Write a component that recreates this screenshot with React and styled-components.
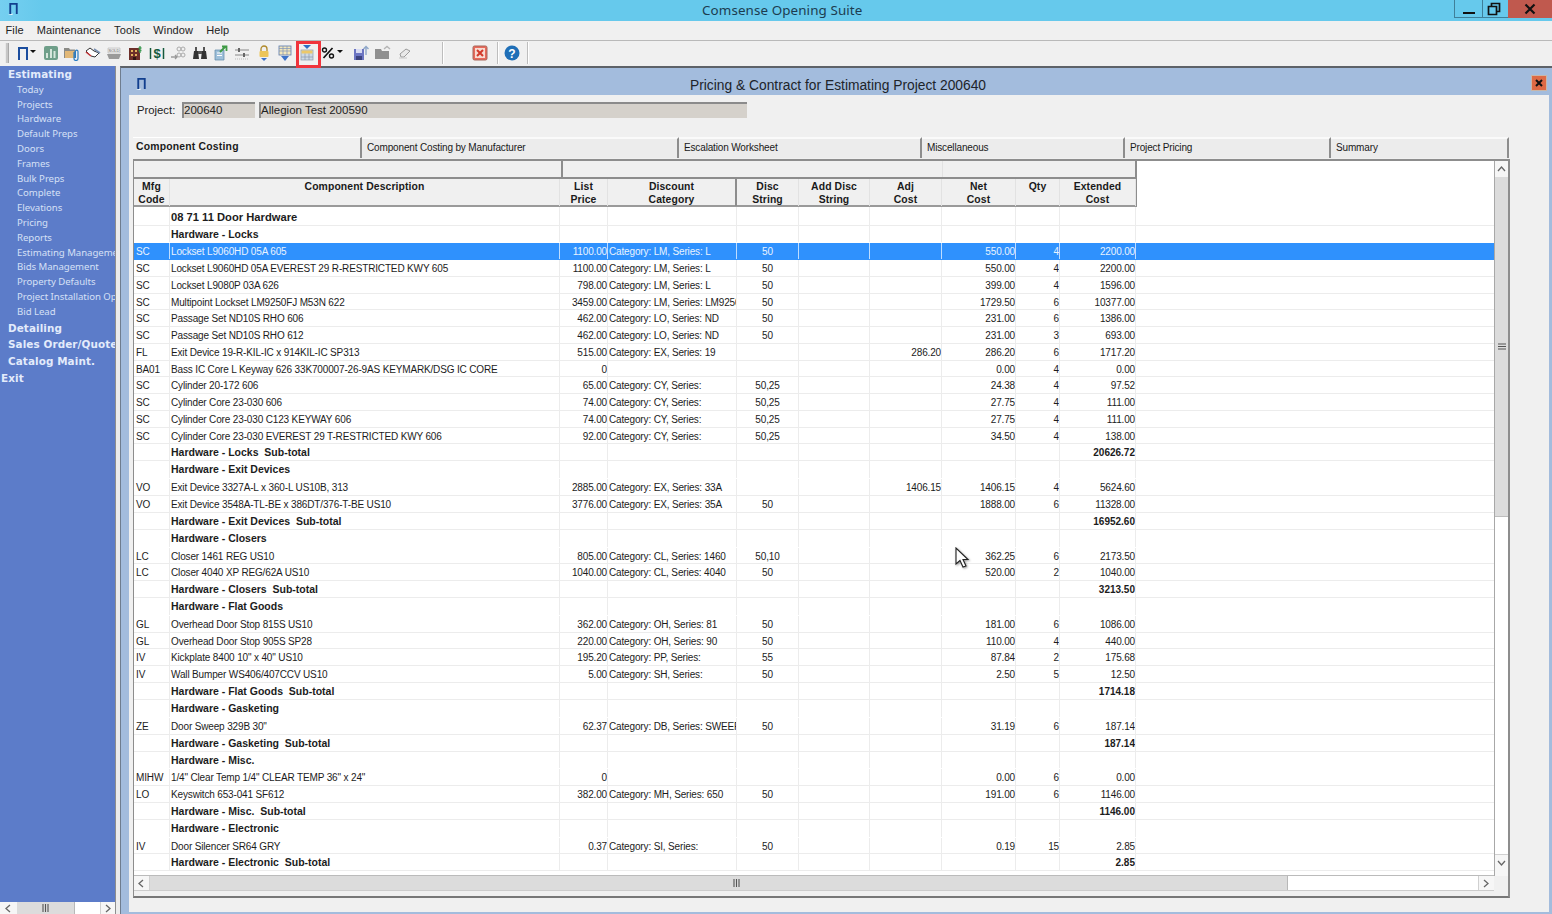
import React from "react";
import styled, { createGlobalStyle } from "styled-components";

const Global = createGlobalStyle`
  html, body { margin: 0; padding: 0; width: 1552px; height: 914px; overflow: hidden; background: #f0f0f0; }
  *, *::after { box-sizing: border-box; }
`;

const Screen = styled.div`
  position: relative;
  width: 1552px; height: 914px; overflow: hidden;
  display: flex; flex-direction: column;
  font-family: "Liberation Sans", Arial, sans-serif; color: #111; background: #f0f0f0;
`;
const TitleBar = styled.div`
  position: relative;
  height: 21px; flex: none; background: #66c9ec;
  display: flex; align-items: flex-start;
`;
const LogoCell = styled.div`
  width: 42px; height: 21px; padding: 2px 0 0 7px; background: linear-gradient(90deg,#75cff0,#66c9ec);
`;
const TitleText = styled.div`
  position: absolute; left: 702px; top: 2px;
  font: 13.4px/17px "Noto Sans", sans-serif; color: #1c3c50; white-space: nowrap; letter-spacing: .1px;
`;
const WindowButtons = styled.div`
  margin-left: auto; display: flex; height: 18px;
`;
const WinButton = styled.div`
  width: ${p => p.$w}px; height: 18px; display: flex; align-items: center; justify-content: center;
  padding-right: ${p => p.$pr || 0}px;
  background: ${p => p.$bg || "transparent"};
  border-left: ${p => p.$edge ? "1px solid #3f7f99" : "none"};
  border-bottom: ${p => p.$edge ? "1px solid #3f7f99" : "none"};
`;
const MenuBar = styled.div`
  height: 20px; flex: none; background: #f0f0f0; border-bottom: 1px solid #b9b9b9;
  display: flex; align-items: center; padding: 0 0 2px 5.500px; gap: 13px;
  font-size: 11px; color: #222;
`;
const MenuItem = styled.span` letter-spacing: .12px; `;
const Toolbar = styled.div`
  height: 25px; flex: none; background: #f0f0f0; display: flex; align-items: center; padding: 0 0 1px 5px;
`;
const Grip = styled.div`
  width: 4px; height: 20px; margin-right: 3px; background: #c6c6c6; border-left: 1px solid #e8e8e8; border-right: 1px solid #a8a8a8;
`;
const ToolButton = styled.div`
  position: relative; flex: none; width: ${p => p.$w || 21.3}px; height: 24px;
  display: flex; align-items: center; padding-left: ${p => p.$pad ?? 2.6}px;
`;
const Marked = styled(ToolButton)`
  &::after { content: ""; position: absolute; left: 0; top: 0; width: 25px; height: 27px; border: 3px solid #f0343c; }
`;
const Caret = styled.span`
  position: absolute; right: ${p => p.$r}px; top: 9px; width: 0; height: 0;
  border-left: 3px solid transparent; border-right: 3px solid transparent; border-top: 3px solid #111;
`;
const ToolSep = styled.div`
  flex: none; width: 1px; height: 22px; background: #bdbdbd; box-shadow: 1px 0 0 #fff; margin-left: ${p => p.$l}px;
`;
const Workspace = styled.div`
  flex: 1; min-height: 0; display: flex; background: #ececec;
`;
const Sidebar = styled.div`
  width: 116px; flex: none; display: flex; flex-direction: column; border-right: 1.500px solid #8e8e8e;
`;
const NavList = styled.div`
  flex: 1; min-height: 0; background: #5c7cc9; overflow: hidden;
`;
const NavHead = styled.div`
  height: 16.8px; padding-left: ${p => p.$flush ? 1 : 8}px; letter-spacing: .1px;
  font: bold 10.4px/16.8px "DejaVu Sans", sans-serif; color: #e3ebfb; white-space: nowrap; overflow: hidden;
`;
const NavItem = styled.div`
  height: 14.8px; line-height: 14.8px; padding-left: 17px; letter-spacing: -.03px;
  font-family: "Noto Sans", sans-serif; font-size: 9.6px; color: #d6e0f6; white-space: nowrap; overflow: hidden;
`;
const SideScroll = styled.div`
  height: 12px; flex: none; display: flex; background: #f4f4f4; align-items: stretch;
`;
const ScrollEnd = styled.div`
  flex: none; width: ${p => p.$w}px; height: ${p => p.$h ? p.$h + "px" : "auto"}; background: #f6f6f6;
  display: flex; align-items: center; justify-content: center;
  border-right: ${p => p.$lr ? "1px solid #d0d0d0" : "none"};
  border-left: ${p => p.$ll ? "1px solid #d0d0d0" : "none"};
  border-top: ${p => p.$lt ? "1px solid #d0d0d0" : "none"};
`;
const HThumb = styled.div`
  flex: none; width: ${p => p.$w}px; background: #dcdcdc; display: flex; align-items: center; justify-content: center;
  border-right: 1px solid #b8b8b8; padding-left: ${p => p.$shift || 0}px;
`;
const ScrollSpace = styled.div` flex: 1; background: #fff; `;
const ChildWindow = styled.div`
  flex: 1; min-width: 0; margin-left: 4px; display: flex; flex-direction: column; background: #a3bcdd;
  border-top: 2px solid #5d6268; border-left: 1px solid #6f7d8f; padding: 0 3px 2px 8px;
`;
const ChildTitle = styled.div`
  position: relative; height: 27px; flex: none; margin-left: -8px; margin-right: -3px; padding: 9px 0 0 14px;
  display: flex; align-items: flex-start;
`;
const ChildTitleText = styled.div`
  position: absolute; left: 569px; top: 9px; font-size: 13.8px; line-height: 17px; color: #20242a; white-space: nowrap;
`;
const ChildClose = styled.div`
  position: absolute; right: 5px; top: 7px; width: 16px; height: 16px; background: #dd6a45; border: 1px solid #c9b6a8;
  display: flex; align-items: center; justify-content: center;
`;
const ChildBody = styled.div`
  flex: 1; min-height: 0; background: #f0f0f0; display: flex; flex-direction: column; padding: 7px 0 0 4px;
`;
const ProjectRow = styled.div`
  display: flex; align-items: center; height: 16px; font-size: 11px; padding-left: 4px; flex: none; color: #222;
`;
const ProjectLabel = styled.span` width: 45px; font-size: 11.3px; `;
const FieldBox = styled.div`
  width: ${p => p.$w}px; height: 16px; margin-right: 4px; background: #d5d1cb; border-top: 2px solid #8b8b8b; border-left: 2px solid #8b8b8b;
  font-size: 11.5px; line-height: 13px; color: #222; white-space: nowrap;
`;
const Tabs = styled.div`
  display: flex; height: 21px; margin-top: 19px; flex: none; width: 1380px;
`;
const Tab = styled.div`
  flex: none; width: ${p => p.$w}px; height: 21px; padding: ${p => p.$on ? "2px 0 0 3px" : "2px 0 0 5px"};
  background: ${p => p.$on ? "#f0f0f0" : "#ececec"};
  border-top: ${p => p.$on ? "1px solid #fff" : "2px solid #fafafa"};
  border-right: 2px solid #8d8d8d;
  font-size: ${p => p.$on ? "10.4px" : "10px"}; font-weight: ${p => p.$on ? 700 : 400};
  line-height: 14px; color: #1a1a1a; white-space: nowrap; letter-spacing: ${p => p.$on ? ".2px" : "-.15px"};
`;
const TableFrame = styled.div`
  width: 1377px; height: 739px; margin-top: 1px; flex: none; display: flex; flex-direction: column;
  border-top: 2px solid #8d8d8d; border-left: 1px solid #8d8d8d; border-right: 2px solid #8d8d8d; border-bottom: 2px solid #777;
  background: #f0f0f0;
`;
const TableTop = styled.div` flex: 1; min-height: 0; display: flex; `;
const GridArea = styled.div` width: 1360px; flex: none; background: #fff; overflow: hidden; border-bottom: 1px solid #bbb; `;
const Band = styled.div`
  width: 1003px; height: 18px; display: flex; background: #f0f0f0; border-bottom: 2px solid #8d8d8d; border-right: 2px solid #8d8d8d;
`;
const BandCell = styled.div`
  height: 16px; width: ${p => p.$w}px; border-right: ${p => p.$line || "none"};
`;
const cols = "36px 390px 48px 129px 62px 71px 72px 74px 44px 76px 1fr";
const HeadRow = styled.div`
  display: grid; grid-template-columns: ${cols}; width: 1003px; height: 28px; background: #f0f0f0;
  border-bottom: 2px solid #9a9a9a; border-right: 2px solid #8d8d8d;
`;
const HeadCell = styled.div`
  font-size: 10.4px; font-weight: 700; line-height: 13px; text-align: center; padding-top: 1px; color: #1a1a1a;
  border-right: ${p => p.$dark ? "2px solid #8d8d8d" : "1px solid #e2e2e2"}; letter-spacing: .1px;
`;
const Row = styled.div`
  display: grid; grid-template-columns: ${cols}; height: ${p => p.$h}px;
  background: ${p => p.$sel ? "#2f91fd" : "#fff"}; color: ${p => p.$sel ? "#e9f3ff" : "#1c1c1c"};
  border-bottom: 1px solid ${p => p.$noline ? "transparent" : p.$sel ? "#2f91fd" : "#ececec"};
`;
const Cell = styled.div`
  font-size: ${p => p.$size || 10}px; font-weight: ${p => p.$bold ? 700 : 400};
  line-height: ${p => p.$lh || 17.5}px; white-space: pre; overflow: hidden;
  letter-spacing: ${p => p.$bold ? "0" : "-.15px"};
  text-align: ${p => p.$a || "left"}; padding: ${p => p.$pad || "0 1px 0 1px"};
  border-right: 1px solid ${p => p.$sel ? "#ffffffb0" : "#ececec"};
`;
const VScroll = styled.div`
  width: 14px; flex: none; display: flex; flex-direction: column; background: #fff; border-left: 1px solid #a8a8a8;
`;
const VThumb = styled.div`
  height: 340px; flex: none; background: #dcdcdc; border-bottom: 1px solid #bdbdbd;
  display: flex; align-items: center; justify-content: center;
`;
const VGap = styled.div` height: 4px; flex: none; background: #f6f6f6; `;
const HScroll = styled.div`
  height: 15px; flex: none; display: flex; background: #fff; margin-right: 14px; border-bottom: 1px solid #ccc;
`;
const HScrollCorner = styled.div` height: 5px; flex: none; background: #f0f0f0; `;
const CursorMark = styled.div`
  position: absolute; left: 955px; top: 547px; width: 16px; height: 22px; filter: drop-shadow(1px 1px 1px #0006);
`;

const Logo = ({ s = 14 }) => (
  <svg width={s} height={s + 1} viewBox="0 0 14 15">
    <path d="M1 14 C3 13 5 13 6 12 L6 14 Z" fill="#e8f3fa" />
    <path d="M3.5 13V2H10.5V13" fill="none" stroke="#123f8e" strokeWidth="2" />
  </svg>
);
const Chev = ({ d }) => {
  const paths = { l: "M6 1 2 4.5 6 8", r: "M2 1 6 4.5 2 8", u: "M1 6 4.5 2 8 6", d: "M1 2 4.5 6 8 2" };
  return <svg width="9" height="9" viewBox="0 0 9 9"><path d={paths[d]} fill="none" stroke="#666" strokeWidth="1.3" /></svg>;
};
const GripH = () => <svg width="8" height="8" viewBox="0 0 8 8"><path d="M1 0v8M3.5 0v8M6 0v8" stroke="#555" strokeWidth="1.1" /></svg>;
const GripV = () => <svg width="8" height="8" viewBox="0 0 8 8"><path d="M0 1h8M0 3.5h8M0 6h8" stroke="#555" strokeWidth="1.1" /></svg>;

const Ico = ({ children }) => <svg width="16" height="16" viewBox="0 0 16 16" style={{ flex: "none" }}>{children}</svg>;
const icons = {
  logo: <Ico><path d="M4 15V3H12V15" fill="none" stroke="#1b4d9e" strokeWidth="2" /></Ico>,
  chart: <Ico><rect x="1" y="1" width="14" height="14" rx="2" fill="#6f9f8a" /><path d="M4 13V8M8 13V4M11.5 13V6" stroke="#d6e6dc" strokeWidth="2" /></Ico>,
  clip: <Ico><path d="M0 3h5l1 1.500h5V13H0Z" fill="#8b8b86" /><path d="M1 6h9v7H1Z" fill="#e2b877" /><path d="M10 7v6.500a2 2 0 0 0 4 0V6.500a1.300 1.300 0 0 0-2.600 0V13" fill="none" stroke="#2a7cc2" strokeWidth="1.200" /></Ico>,
  shake: <Ico><path d="M1 6 5 3 9 6 14 8 10 12 6 11Z" fill="#fff" stroke="#333" strokeWidth="1" /><path d="M1 7 6 11" stroke="#c2373a" strokeWidth="1.600" /><path d="M9 4 15 8" stroke="#7a8fb0" strokeWidth="1.600" /></Ico>,
  sold: <Ico><path d="M1 9h14l-2 5H3Z" fill="#9a9a9a" /><path d="M2 8h12V3H2Z" fill="#ececec" stroke="#b5b5b5" strokeWidth=".6" /><text x="8" y="7" textAnchor="middle" fontSize="4" fill="#666" fontFamily="Liberation Sans">SOLD</text></Ico>,
  build: <Ico><rect x="1" y="3" width="11" height="12" fill="#6d2f2a" /><path d="M3 5h2v2H3ZM7 5h2v2H7ZM3 9h2v2H3ZM7 9h2v2H7Z" fill="#e3b45e" /><path d="M5 12h3v3H5Z" fill="#2f1512" /><path d="M12 1v7M10.500 3h3M10.500 5.500h3" stroke="#3c9a52" strokeWidth="1.300" /></Ico>,
  dollar: <Ico><path d="M1.500 3v11M14.500 3v11" stroke="#145a3c" strokeWidth="1.500" /><text x="8" y="13" textAnchor="middle" fontSize="13" fontWeight="700" fill="#145a3c" fontFamily="Liberation Sans">$</text></Ico>,
  link: <Ico><circle cx="9" cy="4" r="2" fill="none" stroke="#aaa" /><circle cx="13" cy="4" r="2" fill="none" stroke="#aaa" /><circle cx="9" cy="10" r="2" fill="none" stroke="#aaa" /><circle cx="13" cy="10" r="2" fill="none" stroke="#aaa" /><path d="M1 12h6M5 10l2 2-2 2" fill="none" stroke="#9a9a9a" strokeWidth="1.300" /></Ico>,
  bino: <Ico><path d="M2 6h4l1 8H1ZM10 6h4l1 8H9Z" fill="#333" /><path d="M3 2h2v4H3ZM11 2h2v4h-2ZM6 6h4v3H6Z" fill="#555" /></Ico>,
  dist: <Ico><path d="M2 5h9v10H2Z" fill="#9ec0da" stroke="#5d87a8" strokeWidth=".7" /><path d="M4 8h5M4 10.500h5" stroke="#fff" /><path d="M7 7 12 2M9 1.500h4.500V6" fill="none" stroke="#3f9a45" strokeWidth="1.800" /></Ico>,
  slide: <Ico><path d="M1 5h14M1 10h14" stroke="#888" strokeWidth="1.200" /><path d="M5 3v4M10 8v4" stroke="#666" strokeWidth="2" /><path d="M1 14h14" stroke="#bbb" strokeDasharray="1 1" /></Ico>,
  lock: <Ico><path d="M5 6V4a3 3 0 0 1 6 0v2" fill="none" stroke="#b08a2c" strokeWidth="1.300" /><rect x="3.500" y="6" width="9" height="6" rx="1" fill="#ecc55a" /><path d="M5 13h6l-3 3Z" fill="#3d73c8" /></Ico>,
  down: <Ico><rect x="2" y="1" width="12" height="9" fill="#f3e7bb" stroke="#5a79ad" strokeWidth=".8" /><path d="M2 3.500h12M2 6h12M6 1v9M10 1v9" stroke="#7b93bd" strokeWidth=".7" /><path d="M4 11h8l-4 5Z" fill="#3d73c8" /></Ico>,
  filter: <Ico><path d="M4 0h8L8 4Z" fill="#2f6fc4" /><rect x="2" y="5" width="12" height="10" fill="#cdd9e6" stroke="#8e9aab" strokeWidth=".7" /><rect x="2.500" y="5.500" width="11" height="3" fill="#ecc869" /><path d="M6 8.500V15M10 8.500V15M2 12h12" stroke="#8e9aab" strokeWidth=".7" /></Ico>,
  save: <Ico><path d="M1 4h10v11H1Z" fill="#6c75c2" /><path d="M3 4h6v4H3Z" fill="#d9dcf2" /><path d="M3 11h6v4H3Z" fill="#3c437f" /><path d="M13 10V2M10.500 4 13 1.500 15.500 4" fill="none" stroke="#8fa7c9" strokeWidth="1.400" /></Ico>,
  folder: <Ico><path d="M0 4h6l1 2h7v8H0Z" fill="#8f8f8f" /><path d="M9 4 12 1.500 15 4" fill="none" stroke="#b5b5b5" strokeWidth="1.400" /></Ico>,
  erase: <Ico><path d="M4 9 10 4 14 6 8 12H5Z" fill="#e9e9e9" stroke="#9b9b9b" /><path d="M3 13h8" stroke="#c8c8c8" /></Ico>,
  close: <Ico><rect x="1" y="1" width="14" height="14" rx="1.500" fill="#e9695a" stroke="#a5675b" /><rect x="3" y="3" width="10" height="10" fill="#f7dbd2" /><path d="M5 5l6 6M11 5l-6 6" stroke="#d23a2a" strokeWidth="2" /></Ico>,
  help: <Ico><circle cx="8" cy="8" r="7.500" fill="#1f6fb7" /><text x="8" y="12.500" textAnchor="middle" fontSize="12" fontWeight="700" fill="#fff" fontFamily="Liberation Sans">?</text></Ico>,
};
const seq1 = ["chart", "clip", "shake", "sold", "build", "dollar", "link", "bino", "dist", "slide", "lock", "down"];

const navItems = ["Today","Projects","Hardware","Default Preps","Doors","Frames","Bulk Preps","Complete","Elevations","Pricing","Reports","Estimating Management","Bids Management","Property Defaults","Project Installation Options","Bid Lead"];

const heads = [["Mfg","Code"],["Component Description"],["List","Price"],["Discount","Category"],["Disc","String"],["Add Disc","String"],["Adj","Cost"],["Net","Cost"],["Qty"],["Extended","Cost"]];

const i = (m, d, l, c, disc, adj, n, q, e, sel) => ({ k: "item", m, d, l, c, disc, adj, n, q, e, sel });
const g = d => ({ k: "group", d });
const s = (d, e) => ({ k: "sub", d, e });
const rows = [
  { k: "section", d: "08 71 11 Door Hardware" },
  g("Hardware - Locks"),
  i("SC","Lockset L9060HD 05A 605","1100.00","Category: LM, Series: L","50","","550.00","4","2200.00",true),
  i("SC","Lockset L9060HD 05A EVEREST 29 R-RESTRICTED KWY 605","1100.00","Category: LM, Series: L","50","","550.00","4","2200.00"),
  i("SC","Lockset L9080P 03A 626","798.00","Category: LM, Series: L","50","","399.00","4","1596.00"),
  i("SC","Multipoint Lockset LM9250FJ M53N 622","3459.00","Category: LM, Series: LM9250","50","","1729.50","6","10377.00"),
  i("SC","Passage Set ND10S RHO 606","462.00","Category: LO, Series: ND","50","","231.00","6","1386.00"),
  i("SC","Passage Set ND10S RHO 612","462.00","Category: LO, Series: ND","50","","231.00","3","693.00"),
  i("FL","Exit Device 19-R-KIL-IC x 914KIL-IC SP313","515.00","Category: EX, Series: 19","","286.20","286.20","6","1717.20"),
  i("BA01","Bass IC Core L Keyway 626 33K700007-26-9AS KEYMARK/DSG IC CORE","0","","","","0.00","4","0.00"),
  i("SC","Cylinder 20-172 606","65.00","Category: CY, Series:","50,25","","24.38","4","97.52"),
  i("SC","Cylinder Core 23-030 606","74.00","Category: CY, Series:","50,25","","27.75","4","111.00"),
  i("SC","Cylinder Core 23-030 C123 KEYWAY 606","74.00","Category: CY, Series:","50,25","","27.75","4","111.00"),
  i("SC","Cylinder Core 23-030 EVEREST 29 T-RESTRICTED KWY 606","92.00","Category: CY, Series:","50,25","","34.50","4","138.00"),
  s("Hardware - Locks  Sub-total","20626.72"),
  g("Hardware - Exit Devices"),
  i("VO","Exit Device 3327A-L x 360-L US10B, 313","2885.00","Category: EX, Series: 33A","","1406.15","1406.15","4","5624.60"),
  i("VO","Exit Device 3548A-TL-BE x 386DT/376-T-BE US10","3776.00","Category: EX, Series: 35A","50","","1888.00","6","11328.00"),
  s("Hardware - Exit Devices  Sub-total","16952.60"),
  g("Hardware - Closers"),
  i("LC","Closer 1461 REG US10","805.00","Category: CL, Series: 1460","50,10","","362.25","6","2173.50"),
  i("LC","Closer 4040 XP REG/62A US10","1040.00","Category: CL, Series: 4040","50","","520.00","2","1040.00"),
  s("Hardware - Closers  Sub-total","3213.50"),
  g("Hardware - Flat Goods"),
  i("GL","Overhead Door Stop 815S US10","362.00","Category: OH, Series: 81","50","","181.00","6","1086.00"),
  i("GL","Overhead Door Stop 905S SP28","220.00","Category: OH, Series: 90","50","","110.00","4","440.00"),
  i("IV","Kickplate 8400 10\" x 40\" US10","195.20","Category: PP, Series:","55","","87.84","2","175.68"),
  i("IV","Wall Bumper WS406/407CCV US10","5.00","Category: SH, Series:","50","","2.50","5","12.50"),
  s("Hardware - Flat Goods  Sub-total","1714.18"),
  g("Hardware - Gasketing"),
  i("ZE","Door Sweep 329B 30\"","62.37","Category: DB, Series: SWEEP","50","","31.19","6","187.14"),
  s("Hardware - Gasketing  Sub-total","187.14"),
  g("Hardware - Misc."),
  i("MIHW","1/4\" Clear Temp 1/4\" CLEAR TEMP 36\" x 24\"","0","","","","0.00","6","0.00"),
  i("LO","Keyswitch 653-041 SF612","382.00","Category: MH, Series: 650","50","","191.00","6","1146.00"),
  s("Hardware - Misc.  Sub-total","1146.00"),
  g("Hardware - Electronic"),
  i("IV","Door Silencer SR64 GRY","0.37","Category: SI, Series:","50","","0.19","15","2.85"),
  s("Hardware - Electronic  Sub-total","2.85"),
];

const DataRow = ({ r }) => {
  if (r.k === "item") {
    const sel = r.sel;
    return (
      <Row $h={16.77} $sel={sel}>
        <Cell $sel={sel} $pad="0 0 0 2px">{r.m}</Cell>
        <Cell $sel={sel}>{r.d}</Cell>
        <Cell $sel={sel} $a="right" $pad="0">{r.l}</Cell>
        <Cell $sel={sel}>{r.c}</Cell>
        <Cell $sel={sel} $a="center">{r.disc}</Cell>
        <Cell $sel={sel} />
        <Cell $sel={sel} $a="right" $pad="0">{r.adj}</Cell>
        <Cell $sel={sel} $a="right" $pad="0">{r.n}</Cell>
        <Cell $sel={sel} $a="right" $pad="0">{r.q}</Cell>
        <Cell $sel={sel} $a="right" $pad="0">{r.e}</Cell>
      </Row>
    );
  }
  const section = r.k === "section";
  const h = section ? 18.5 : r.k === "group" ? 17.8 : 17;
  const lh = section ? 21 : r.k === "group" ? 17 : 16;
  return (
    <Row $h={h} $noline={r.k === "group"}>
      <Cell />
      <Cell $bold $size={section ? 11.2 : 10.5} $lh={lh}>{r.d}</Cell>
      <Cell /><Cell /><Cell /><Cell /><Cell /><Cell /><Cell />
      <Cell $bold $a="right" $pad="0" $lh={lh + 1} $size={10}>{r.e}</Cell>
    </Row>
  );
};

export default function App() {
  return (
    <Screen>
      <Global />
      <TitleBar>
        <LogoCell><Logo s={13} /></LogoCell>
        <TitleText>Comsense Opening Suite</TitleText>
        <WindowButtons>
          <WinButton $w={28} $edge>
            <svg width="14" height="14" viewBox="0 0 14 14"><path d="M1 11h12" stroke="#111" strokeWidth="2" /></svg>
          </WinButton>
          <WinButton $w={26} $edge $pr={3}>
            <svg width="14" height="14" viewBox="0 0 14 14"><path d="M1.500 4.500h8v8h-8ZM4.500 4V1.500h8v8H10" fill="none" stroke="#111" strokeWidth="1.700" /></svg>
          </WinButton>
          <WinButton $w={44} $bg="#c0594e">
            <svg width="12" height="12" viewBox="0 0 12 12"><path d="M1.500 1.500l9 9M10.500 1.500l-9 9" stroke="#111" strokeWidth="2.200" /></svg>
          </WinButton>
        </WindowButtons>
      </TitleBar>
      <MenuBar>
        {["File","Maintenance","Tools","Window","Help"].map(m => <MenuItem key={m}>{m}</MenuItem>)}
      </MenuBar>
      <Toolbar>
        <Grip />
        <ToolButton $w={28} $pad={3}>{icons.logo}<Caret $r={4} /></ToolButton>
        {seq1.map(n => <ToolButton key={n}>{icons[n]}</ToolButton>)}
        <Marked $pad={3}>{icons.filter}</Marked>
        <ToolButton $w={34} $pad={4}>
          <svg width="14" height="14" viewBox="0 0 14 14"><path d="M11.500 2 2.500 12" stroke="#111" strokeWidth="1.700" /><circle cx="3.500" cy="4" r="2" fill="none" stroke="#111" strokeWidth="1.400" /><circle cx="10.500" cy="10" r="2" fill="none" stroke="#111" strokeWidth="1.400" /></svg>
          <Caret $r={8} />
        </ToolButton>
        <ToolButton>{icons.save}</ToolButton>
        <ToolButton>{icons.folder}</ToolButton>
        <ToolButton>{icons.erase}</ToolButton>
        <ToolSep $l={27} />
        <ToolButton $w={52} $pad={29}>{icons.close}</ToolButton>
        <ToolSep $l={2} />
        <ToolButton $w={22} $pad={6}>{icons.help}</ToolButton>
        <ToolSep $l={7} />
      </Toolbar>
      <Workspace>
        <Sidebar>
          <NavList>
            <NavHead>Estimating</NavHead>
            {navItems.map(n => <NavItem key={n}>{n}</NavItem>)}
            <NavHead>Detailing</NavHead>
            <NavHead>Sales Order/Quote</NavHead>
            <NavHead>Catalog Maint.</NavHead>
            <NavHead $flush>Exit</NavHead>
          </NavList>
          <SideScroll>
            <ScrollEnd $w={17}><Chev d="l" /></ScrollEnd>
            <HThumb $w={58}><GripH /></HThumb>
            <ScrollSpace />
            <ScrollEnd $w={15} $ll><Chev d="r" /></ScrollEnd>
          </SideScroll>
        </Sidebar>
        <ChildWindow>
          <ChildTitle>
            <Logo s={13} />
            <ChildTitleText>Pricing &amp; Contract for Estimating Project 200640</ChildTitleText>
            <ChildClose>
              <svg width="10" height="10" viewBox="0 0 10 10"><path d="M2 2l6 6M8 2 2 8" stroke="#111" strokeWidth="2" /></svg>
            </ChildClose>
          </ChildTitle>
          <ChildBody>
            <ProjectRow>
              <ProjectLabel>Project:</ProjectLabel>
              <FieldBox $w={73}>200640</FieldBox>
              <FieldBox $w={488}>Allegion Test 200590</FieldBox>
            </ProjectRow>
            <Tabs>
              <Tab $on $w={229}>Component Costing</Tab>
              <Tab $w={317}>Component Costing by Manufacturer</Tab>
              <Tab $w={243}>Escalation Worksheet</Tab>
              <Tab $w={203}>Miscellaneous</Tab>
              <Tab $w={206}>Project Pricing</Tab>
              <Tab $w={178}>Summary</Tab>
            </Tabs>
            <TableFrame>
              <TableTop>
                <GridArea>
                  <Band>
                    <BandCell $w={429} $line="2px solid #8d8d8d" />
                    <BandCell $w={380} $line="1px solid #e2e2e2" />
                  </Band>
                  <HeadRow>
                    {heads.map((h, n) => (
                      <HeadCell key={h[0]} $dark={n === 3}>{h.map(t => <div key={t}>{t}</div>)}</HeadCell>
                    ))}
                  </HeadRow>
                  {rows.map((r, n) => <DataRow key={n} r={r} />)}
                </GridArea>
                <VScroll>
                  <ScrollEnd $w={13} $h={16}><Chev d="u" /></ScrollEnd>
                  <VThumb><GripV /></VThumb>
                  <ScrollSpace />
                  <ScrollEnd $w={13} $h={18} $lt><Chev d="d" /></ScrollEnd>
                  <VGap />
                </VScroll>
              </TableTop>
              <HScroll>
                <ScrollEnd $w={16} $lr><Chev d="l" /></ScrollEnd>
                <HThumb $w={1138} $shift={36}><GripH /></HThumb>
                <ScrollSpace />
                <ScrollEnd $w={16} $ll><Chev d="r" /></ScrollEnd>
              </HScroll>
              <HScrollCorner />
            </TableFrame>
          </ChildBody>
        </ChildWindow>
      </Workspace>
      <CursorMark>
        <svg width="16" height="22" viewBox="0 0 16 22">
          <path d="M1 1V17L5 13.500 8 20 11 19 8 12.500H13Z" fill="#fff" stroke="#222" strokeWidth="1.100" />
        </svg>
      </CursorMark>
    </Screen>
  );
}
